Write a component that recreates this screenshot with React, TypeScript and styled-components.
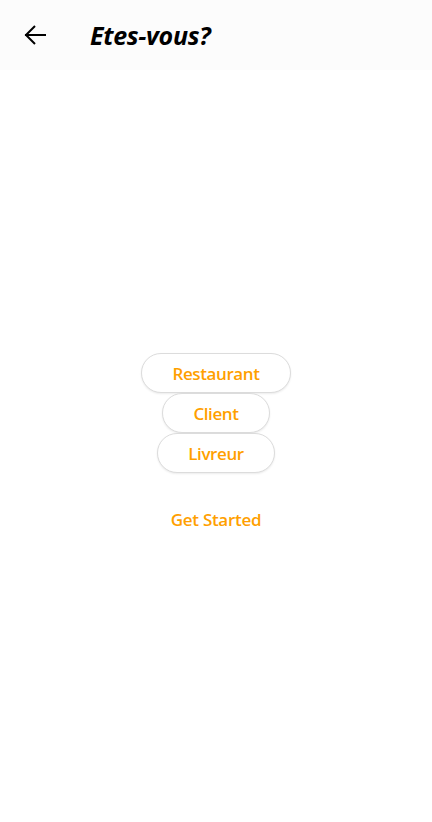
import React from "react";
import styled, { createGlobalStyle } from "styled-components";

const Global = createGlobalStyle`
  html, body { margin: 0; padding: 0; background: #fff; }
  body { font-family: "Open Sans", "Noto Sans", sans-serif; }
`;

const Page = styled.div`
  width: 432px;
  height: 822px;
  display: flex;
  flex-direction: column;
  background: #fff;
`;

const Header = styled.header`
  height: 70px;
  background: #fcfcfc;
  display: flex;
  align-items: center;
  padding-left: 24px;
  box-sizing: border-box;
`;

const BackButton = styled.button`
  border: none;
  background: transparent;
  padding: 0;
  width: 22px;
  height: 22px;
  display: flex;
  align-items: center;
  justify-content: center;
  cursor: pointer;
`;

const Title = styled.h1`
  margin: 0 0 0 44px;
  font-family: "Open Sans", sans-serif;
  font-style: italic;
  font-weight: 700;
  font-size: 25px;
  letter-spacing: -0.3px;
  color: #000;
`;

const Body = styled.main`
  flex: 1;
  display: flex;
  flex-direction: column;
  align-items: center;
  padding-top: 283px;
`;

const Pill = styled.button`
  height: 40px;
  padding: 0 30px;
  border-radius: 20px;
  border: 1px solid #dcdcdc;
  background: #fff;
  box-shadow: 0 1px 2px rgba(0, 0, 0, 0.08);
  color: #ff9f00;
  font-family: "Open Sans", sans-serif;
  font-weight: 600;
  font-size: 17px;
  letter-spacing: -0.4px;
  cursor: pointer;
`;

const Start = styled.button`
  margin-top: 35px;
  border: none;
  background: transparent;
  color: #ff9f00;
  font-family: "Open Sans", sans-serif;
  font-weight: 600;
  font-size: 17px;
  letter-spacing: -0.3px;
  cursor: pointer;
  padding: 0;
`;

export default function App() {
  return (
    <Page>
      <Global />
      <Header>
        <BackButton aria-label="back">
          <svg width="22" height="22" viewBox="0 0 22 22" fill="none" stroke="#000" strokeWidth="2" strokeLinecap="square">
            <path d="M21 11H2" />
            <path d="M11 2L2 11L11 20" strokeLinecap="butt" />
          </svg>
        </BackButton>
        <Title>Etes-vous?</Title>
      </Header>
      <Body>
        <Pill>Restaurant</Pill>
        <Pill>Client</Pill>
        <Pill>Livreur</Pill>
        <Start>Get Started</Start>
      </Body>
    </Page>
  );
}
